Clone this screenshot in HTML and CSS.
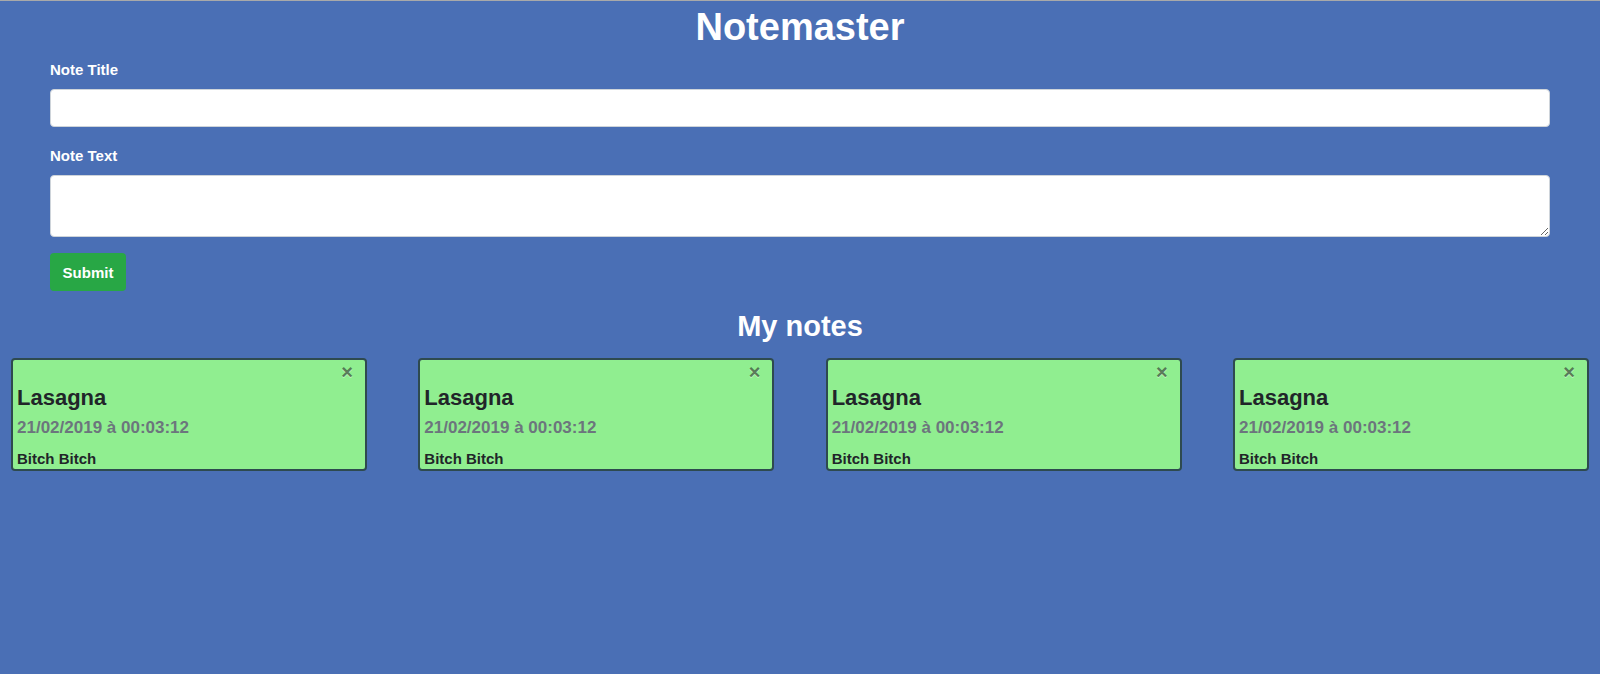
FILE: index.html
```html
<!DOCTYPE html>
<html lang="fr">
<head>
<meta charset="utf-8">
<title>Notemaster</title>
<link rel="stylesheet" href="styles.css">
</head>
<body>
<div class="page">
  <h1 class="app-title">Notemaster</h1>
  <form class="note-form">
    <div class="form-group form-group-title">
      <label class="form-label" for="title">Note Title</label>
      <input class="form-control" id="title" type="text">
    </div>
    <div class="form-group form-group-text">
      <label class="form-label" for="text">Note Text</label>
      <textarea class="form-control form-textarea" id="text" rows="2"></textarea>
    </div>
    <button class="btn-submit" type="button">Submit</button>
  </form>
  <h2 class="section-title">My notes</h2>
  <div class="notes">
    <div class="note">
      <div class="note-head"><span class="note-close">×</span></div>
      <h3 class="note-title">Lasagna</h3>
      <div class="note-date">21/02/2019 à 00:03:12</div>
      <div class="note-body">Bitch Bitch</div>
    </div>
    <div class="note">
      <div class="note-head"><span class="note-close">×</span></div>
      <h3 class="note-title">Lasagna</h3>
      <div class="note-date">21/02/2019 à 00:03:12</div>
      <div class="note-body">Bitch Bitch</div>
    </div>
    <div class="note">
      <div class="note-head"><span class="note-close">×</span></div>
      <h3 class="note-title">Lasagna</h3>
      <div class="note-date">21/02/2019 à 00:03:12</div>
      <div class="note-body">Bitch Bitch</div>
    </div>
    <div class="note">
      <div class="note-head"><span class="note-close">×</span></div>
      <h3 class="note-title">Lasagna</h3>
      <div class="note-date">21/02/2019 à 00:03:12</div>
      <div class="note-body">Bitch Bitch</div>
    </div>
  </div>
</div>
</body>
</html>
```

FILE: styles.css
```css
html, body {
  margin: 0;
  padding: 0;
  height: 100%;
}
body {
  background: #4a6fb5;
  font-family: "Liberation Sans", Arial, sans-serif;
  font-weight: 700;
  color: #212529;
  border-top: 1px solid #a9a9a9;
  box-sizing: border-box;
}
.page {
  display: flex;
  flex-direction: column;
}
.app-title {
  margin: 3px 0 0;
  text-align: center;
  color: #fff;
  font-size: 38px;
  line-height: 46px;
  font-weight: 700;
}
.note-form {
  margin: 9px 50px 0;
  display: flex;
  flex-direction: column;
  align-items: flex-start;
}
.form-group {
  width: 100%;
  display: flex;
  flex-direction: column;
}
.form-group-title {
  margin-bottom: 18px;
}
.form-group-text {
  margin-bottom: 16px;
}
.form-label {
  color: #fff;
  font-size: 15px;
  line-height: 22px;
  margin-bottom: 8px;
}
.form-control {
  box-sizing: border-box;
  width: 100%;
  height: 38px;
  margin: 0;
  border: 1px solid #ced4da;
  border-radius: 4px;
  background: #fff;
  font-family: inherit;
  font-size: 16px;
  padding: 6px 12px;
}
.form-textarea {
  height: 62px;
  resize: vertical;
}
.btn-submit {
  width: 76px;
  height: 38px;
  margin: 0;
  border: none;
  border-radius: 4px;
  background: #28a745;
  color: #fff;
  font-family: inherit;
  font-weight: 700;
  font-size: 15px;
  padding: 0;
}
.section-title {
  margin: 18px 0 0;
  text-align: center;
  color: #fff;
  font-size: 29px;
  line-height: 35px;
  font-weight: 700;
}
.notes {
  margin-top: 14px;
  padding: 0 11px;
  display: flex;
  justify-content: space-between;
}
.note {
  box-sizing: border-box;
  width: 356px;
  height: 113px;
  border: 2px solid #2e4a4f;
  border-radius: 4px;
  background: #90ee90;
  padding: 0 4px;
  display: flex;
  flex-direction: column;
}
.note-head {
  display: flex;
  justify-content: flex-end;
  height: 25px;
  padding-right: 8px;
}
.note-close {
  font-size: 20px;
  font-weight: 700;
  line-height: 25px;
  color: rgba(0, 0, 0, 0.5);
  text-shadow: 0 1px 0 rgba(255, 255, 255, 0.4);
}
.note-title {
  margin: 0;
  font-size: 22px;
  line-height: 26px;
  color: #212529;
}
.note-date {
  margin-top: 6px;
  font-size: 17px;
  line-height: 22px;
  color: #6c757d;
}
.note-body {
  margin-top: 10px;
  font-size: 15px;
  line-height: 20px;
  color: #212529;
}
```
